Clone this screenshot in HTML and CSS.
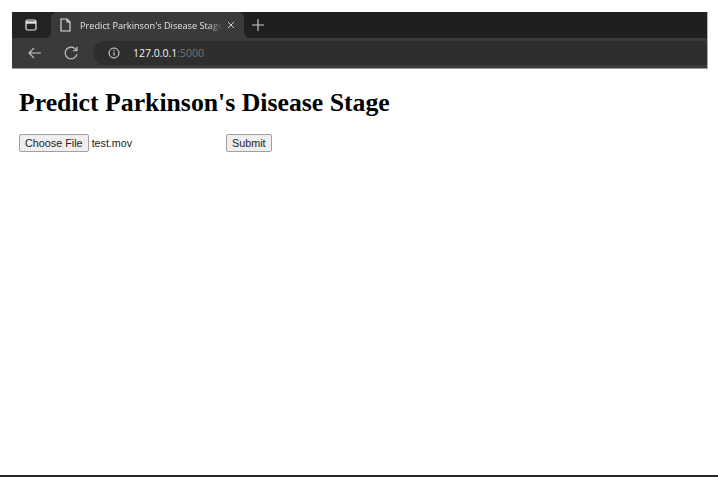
FILE: index.html
```html
<!DOCTYPE html>
<html lang="en">
<head>
    <meta charset="UTF-8">
    <meta name="viewport" content="width=device-width, initial-scale=1.0">
    <title>Predict Parkinson's Disease Stage</title>
    <link rel="stylesheet" href="styles.css">
</head>
<body>
    <div class="browser">
        <div class="tab-strip">
            <div class="tab-menu">
                <svg width="12" height="12" viewBox="0 0 12 12" fill="none" stroke="#e8e8e8" stroke-width="1.2">
                    <rect x="1" y="1" width="10" height="10" rx="1.5"/>
                    <path d="M1 3.5h10" stroke-width="2.4"/>
                </svg>
            </div>
            <div class="tab">
                <svg width="11" height="14" viewBox="0 0 11 14" fill="none" stroke="#e0e0e0" stroke-width="1.1">
                    <path d="M1 1h6l3 3v9H1z"/>
                    <path d="M7 1v3h3"/>
                </svg>
                <span class="tab-title">Predict Parkinson's Disease Stage</span>
                <svg class="tab-close" width="8" height="8" viewBox="0 0 8 8" stroke="#d0d0d0" stroke-width="1">
                    <path d="M1 1l6 6M7 1l-6 6"/>
                </svg>
            </div>
            <div class="tab-filler">
                <svg width="12" height="12" viewBox="0 0 12 12" stroke="#cfcfcf" stroke-width="1.1">
                    <path d="M6 0v12M0 6h12"/>
                </svg>
            </div>
        </div>
        <div class="toolbar">
            <svg width="14" height="12" viewBox="0 0 14 12" fill="none" stroke="#c4c4c4" stroke-width="1.1">
                <path d="M13 6H1M6 1L1 6l5 5"/>
            </svg>
            <svg class="reload" width="14" height="14" viewBox="0 0 13 13" fill="none" stroke="#c4c4c4" stroke-width="1.1">
                <path d="M11.5 4A5.5 5.5 0 1 0 12 7.5"/>
                <path d="M12 .8V4.4H8.4"/>
            </svg>
            <div class="address">
                <svg width="12" height="12" viewBox="0 0 12 12" fill="none" stroke="#e0e0e0" stroke-width="1">
                    <circle cx="6" cy="6" r="5"/>
                    <path d="M6 5.2v3.4M6 3v1.2"/>
                </svg>
                <span class="url">127.0.0.1<span class="port">:5000</span></span>
            </div>
        </div>
    </div>

    <div class="content">
        <h1>Predict Parkinson's Disease Stage</h1>
        <form class="upload-form">
            <div class="file-field">
                <button type="button" class="btn">Choose File</button>
                <span class="file-name">test.mov</span>
            </div>
            <button type="button" class="btn">Submit</button>
        </form>
    </div>

    <div class="bottom-edge"></div>
</body>
</html>
```

FILE: styles.css
```css
html, body {
    height: 100%;
}

body {
    margin: 0;
    background-color: #ffffff;
    display: flex;
    flex-direction: column;
    overflow: hidden;
}

/* Browser window screenshot at the top */
.browser {
    margin: 12px 10px 0 12px;
    font-family: "Open Sans", "Noto Sans", sans-serif;
    border-bottom: 1px solid #9a9a9a;
    border-right: 1px solid #b0b0b0;
}

.tab-strip {
    height: 26px;
    background: linear-gradient(#1f1f1f 50%, #3a3a3a 50%);
    display: flex;
}

.tab-menu {
    width: 39px;
    box-sizing: border-box;
    padding-right: 2px;
    background-color: #222222;
    border-radius: 0 0 6px 0;
    display: flex;
    justify-content: center;
    align-items: center;
}

.tab {
    width: 193px;
    box-sizing: border-box;
    padding: 0 9px;
    background-color: #3a3a3a;
    border-radius: 6px 6px 0 0;
    display: flex;
    align-items: center;
    color: #e4e4e4;
    font-size: 9.2px;
}

.tab-title {
    width: 143px;
    margin-left: 9px;
    white-space: nowrap;
    overflow: hidden;
    -webkit-mask-image: linear-gradient(to right, #000 90%, transparent);
    mask-image: linear-gradient(to right, #000 90%, transparent);
}

.tab-close {
    margin-left: 4px;
}

.tab-filler {
    flex: 1;
    padding-left: 8px;
    background-color: #1f1f1f;
    border-radius: 0 0 0 6px;
    display: flex;
    align-items: center;
}

.toolbar {
    height: 30px;
    background-color: #3a3a3a;
    display: flex;
    align-items: center;
    padding-left: 16px;
}

.reload {
    margin-left: 22px;
}

.address {
    flex: 1;
    height: 24px;
    margin-left: 15px;
    padding-left: 15px;
    background-color: #2e2e2e;
    border-radius: 12px 0 0 12px;
    display: flex;
    align-items: center;
    gap: 13px;
}

.url {
    color: #f4f4f4;
    font-size: 10.5px;
}

.port {
    color: #777777;
}

/* Page itself */
.content {
    flex: 1;
    padding: 0 19px;
    font-family: "Liberation Sans", Arial, sans-serif;
}

h1 {
    margin: 19px 0 0;
    font-family: "Liberation Serif", "Times New Roman", serif;
    font-size: 25.75px;
    line-height: 29px;
    font-weight: bold;
    color: #000000;
}

.upload-form {
    margin-top: 17px;
    display: flex;
    align-items: center;
}

.file-field {
    width: 207px;
    display: flex;
    align-items: center;
}

.btn {
    height: 18px;
    padding: 0 5px;
    font-family: "Liberation Sans", Arial, sans-serif;
    font-size: 10.8px;
    color: #222222;
    background-color: #efefef;
    border: 1px solid #a0a0a0;
    border-radius: 2px;
}

.file-name {
    margin-left: 3px;
    font-size: 10.7px;
    color: #222222;
}

.bottom-edge {
    height: 2px;
    background-color: #262626;
}
```
